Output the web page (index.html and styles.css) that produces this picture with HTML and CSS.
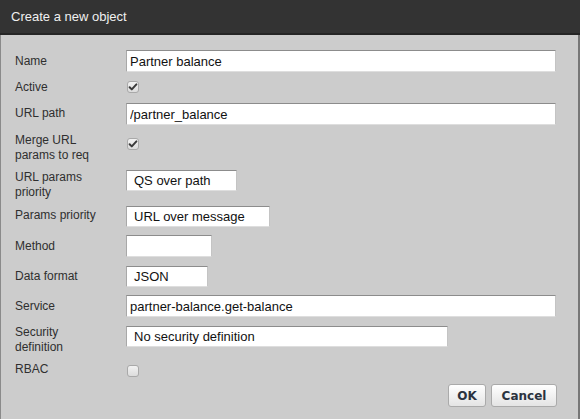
FILE: index.html
```html
<!DOCTYPE html>
<html>
<head>
<meta charset="utf-8">
<link rel="stylesheet" href="styles.css">
</head>
<body>
<div class="dialog">
  <div class="titlebar">Create a new object</div>
  <div class="content">
    <div class="row row-name">
      <div class="lbl">Name</div>
      <input class="field f-wide" type="text" value="Partner balance">
    </div>
    <div class="row row-active">
      <div class="lbl">Active</div>
      <span class="check"><svg viewBox="0 0 12 12" width="12" height="12"><path d="M2.6 6.2 L4.8 8.4 L9.4 3.4" fill="none" stroke="#3a3a3a" stroke-width="2" stroke-linecap="round" stroke-linejoin="round"/></svg></span>
    </div>
    <div class="row row-path">
      <div class="lbl">URL path</div>
      <input class="field f-wide" type="text" value="/partner_balance">
    </div>
    <div class="row row-merge">
      <div class="lbl">Merge URL<br>params to req</div>
      <span class="check"><svg viewBox="0 0 12 12" width="12" height="12"><path d="M2.6 6.2 L4.8 8.4 L9.4 3.4" fill="none" stroke="#3a3a3a" stroke-width="2" stroke-linecap="round" stroke-linejoin="round"/></svg></span>
    </div>
    <div class="row row-urlprio">
      <div class="lbl">URL params<br>priority</div>
      <div class="field sel s-qs">QS over path</div>
    </div>
    <div class="row row-prio">
      <div class="lbl">Params priority</div>
      <div class="field sel s-url">URL over message</div>
    </div>
    <div class="row row-method">
      <div class="lbl">Method</div>
      <input class="field f-method" type="text" value="">
    </div>
    <div class="row row-format">
      <div class="lbl">Data format</div>
      <div class="field sel s-json">JSON</div>
    </div>
    <div class="row row-service">
      <div class="lbl">Service</div>
      <input class="field f-wide" type="text" value="partner-balance.get-balance">
    </div>
    <div class="row row-security">
      <div class="lbl">Security<br>definition</div>
      <div class="field sel s-sec">No security definition</div>
    </div>
    <div class="row row-rbac">
      <div class="lbl">RBAC</div>
      <span class="check"></span>
    </div>
    <div class="buttons">
      <button class="btn btn-ok">OK</button>
      <button class="btn btn-cancel">Cancel</button>
    </div>
  </div>
</div>
</body>
</html>
```
FILE: styles.css
```css
html, body {
  margin: 0;
  padding: 0;
  background: #cccccc;
}

.dialog {
  width: 580px;
  height: 419px;
  overflow: hidden;
  font-family: Arial, "Liberation Sans", sans-serif;
  background: #cccccc;
}

.titlebar {
  height: 33px;
  line-height: 33px;
  background: #333333;
  border-bottom: 2px solid #252525;
  color: #f0f0f0;
  font-size: 13px;
  padding-left: 11px;
}

.content {
  height: 384px;
  box-sizing: border-box;
  border-left: 1px solid #8a8a8a;
  border-right: 2px solid #777777;
  padding: 15px 21px 0 14px;
}

.row {
  display: flex;
  align-items: flex-start;
}

.lbl {
  width: 111px;
  flex: none;
  font-size: 12px;
  line-height: 15px;
  color: #2f2f2f;
}

.field {
  box-sizing: border-box;
  height: 22px;
  margin: 0;
  border: 1px solid;
  border-color: #8c8c8c #c4c4c4 #dedede #a8a8a8;
  background: #ffffff;
  font-family: Arial, "Liberation Sans", sans-serif;
  font-size: 13px;
  color: #111111;
  padding: 0 3px;
  outline: none;
  border-radius: 0;
}

.f-wide { width: 430px; }
.f-method { width: 86px; }

.sel {
  height: 21px;
  line-height: 19px;
  padding: 0 7px;
  white-space: nowrap;
}
.s-qs { width: 111px; }
.s-url { width: 144px; }
.s-json { width: 82px; }
.s-sec { width: 322px; }

.check {
  box-sizing: border-box;
  width: 12px;
  height: 12px;
  margin-left: 1px;
  border: 1px solid #a9a9a9;
  border-radius: 3px;
  background: linear-gradient(#f2f2f2, #dcdcdc);
  display: flex;
  align-items: center;
  justify-content: center;
}
.check svg {
  display: block;
  flex: none;
}

/* per-row vertical rhythm */
.row-name { height: 29px; }
.row-name .lbl { padding-top: 4px; }

.row-active { height: 24px; }
.row-active .lbl { padding-top: 1px; }
.row-active .check { margin-top: 2px; }

.row-path { height: 29px; }
.row-path .lbl { padding-top: 3px; }

.row-merge { height: 37px; }
.row-merge .lbl { padding-top: 1px; }
.row-merge .check { margin-top: 6px; }

.row-urlprio { height: 36px; }
.row-urlprio .lbl { padding-top: 1px; }
.row-urlprio .field { margin-top: 1px; }

.row-prio { height: 30px; }
.row-prio .lbl { padding-top: 3px; }
.row-prio .field { margin-top: 1px; }

.row-method { height: 30px; }
.row-method .lbl { padding-top: 4px; }

.row-format { height: 30px; }
.row-format .lbl { padding-top: 4px; }
.row-format .field { margin-top: 1px; }

.row-service { height: 29px; }
.row-service .lbl { padding-top: 4px; }

.row-security { height: 37px; }
.row-security .lbl { padding-top: 1px; }
.row-security .field { margin-top: 2px; }

.row-rbac { height: 23px; }
.row-rbac .lbl { padding-top: 1px; }
.row-rbac .check { margin-top: 4px; }

.buttons {
  display: flex;
  justify-content: flex-end;
  gap: 5px;
}

.btn {
  box-sizing: border-box;
  height: 23px;
  margin: 0;
  padding: 0;
  border: 1px solid #aaaaaa;
  border-radius: 3px;
  background: linear-gradient(#ffffff, #e4e4e4);
  font-family: "DejaVu Sans", Verdana, sans-serif;
  font-weight: bold;
  font-size: 12px;
  color: #2b3340;
}
.btn-ok { width: 38px; }
.btn-cancel { width: 66px; }
```
